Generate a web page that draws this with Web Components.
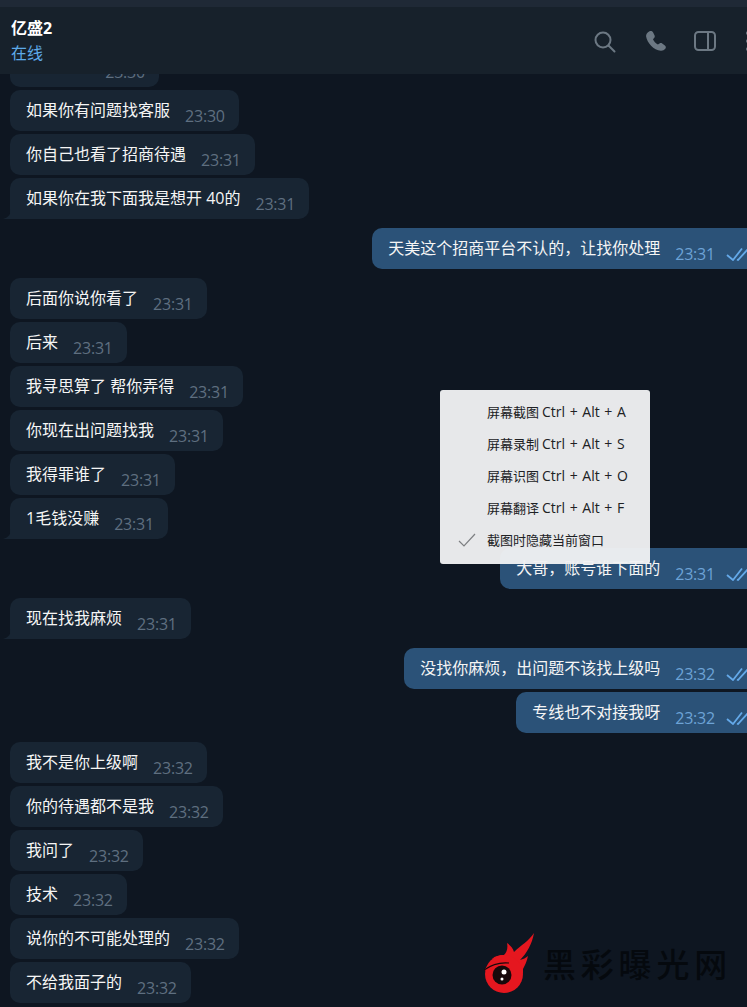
<!DOCTYPE html>
<html>
<head>
<meta charset="utf-8">
<style>
    html, body {
        margin: 0;
        height: 100%;
        overflow: hidden;
        background: #0e1621;
    }
    body {
        font-family: "Open Sans", "Noto Sans CJK SC", sans-serif;
        display: flex;
        flex-direction: column;
        position: relative;
    }
</style>
</head>
<body>
<chat-header name="亿盛2" status="在线"></chat-header>
<message-list>
    <chat-bubble time="23:30" style="--w:149px"></chat-bubble>
    <chat-bubble time="23:30">如果你有问题找客服</chat-bubble>
    <chat-bubble time="23:31">你自己也看了招商待遇</chat-bubble>
    <chat-bubble time="23:31" tail last>如果你在我下面我是想开 40的</chat-bubble>
    <chat-bubble time="23:31" out last>天美这个招商平台不认的，让找你处理</chat-bubble>
    <chat-bubble time="23:31">后面你说你看了</chat-bubble>
    <chat-bubble time="23:31">后来</chat-bubble>
    <chat-bubble time="23:31">我寻思算了 帮你弄得</chat-bubble>
    <chat-bubble time="23:31">你现在出问题找我</chat-bubble>
    <chat-bubble time="23:31">我得罪谁了</chat-bubble>
    <chat-bubble time="23:31" tail last>1毛钱没赚</chat-bubble>
    <chat-bubble time="23:31" out last>大哥，账号谁下面的</chat-bubble>
    <chat-bubble time="23:31" tail last>现在找我麻烦</chat-bubble>
    <chat-bubble time="23:32" out>没找你麻烦，出问题不该找上级吗</chat-bubble>
    <chat-bubble time="23:32" out last>专线也不对接我呀</chat-bubble>
    <chat-bubble time="23:32">我不是你上级啊</chat-bubble>
    <chat-bubble time="23:32">你的待遇都不是我</chat-bubble>
    <chat-bubble time="23:32">我问了</chat-bubble>
    <chat-bubble time="23:32">技术</chat-bubble>
    <chat-bubble time="23:32">说你的不可能处理的</chat-bubble>
    <chat-bubble time="23:32">不给我面子的</chat-bubble>
</message-list>
<capture-menu>
    <menu-row keys="Ctrl + Alt + A">屏幕截图</menu-row>
    <menu-row keys="Ctrl + Alt + S">屏幕录制</menu-row>
    <menu-row keys="Ctrl + Alt + O">屏幕识图</menu-row>
    <menu-row keys="Ctrl + Alt + F">屏幕翻译</menu-row>
    <menu-row checked>截图时隐藏当前窗口</menu-row>
</capture-menu>
<site-mark>黑彩曝光网</site-mark>

<script>
class ChatHeader extends HTMLElement {
    constructor() {
        super();
        this.attachShadow({ mode: 'open' });
    }

    connectedCallback() {
        this.shadowRoot.innerHTML = `
            <style>
                :host {
                    display: block;
                    flex: none;
                    position: relative;
                    z-index: 2;
                    border-top: 7px solid #1f2936;
                    background: #17212b;
                    height: 67px;
                    color: #fff;
                }
                .row {
                    display: flex;
                    align-items: center;
                    justify-content: space-between;
                    height: 100%;
                    padding-left: 11px;
                }
                .who {
                    padding-top: 4px;
                }
                .name {
                    font-size: 16px;
                    font-weight: 700;
                    line-height: 24px;
                    margin-top: -5px;
                }
                .status {
                    font-size: 16px;
                    line-height: 24px;
                    margin-top: 1px;
                    color: #5eaae8;
                }
                .icons {
                    display: flex;
                    align-items: center;
                    margin-right: -13px;
                    margin-top: 1px;
                }
                svg {
                    display: block;
                    flex: none;
                    width: 24px;
                    height: 24px;
                    fill: none;
                    stroke: #6c7883;
                    stroke-width: 2;
                    stroke-linecap: round;
                }
                .solid {
                    fill: #6c7883;
                    stroke: none;
                }
            </style>
            <div class="row">
                <div class="who">
                    <div class="name">${this.getAttribute('name')}</div>
                    <div class="status">${this.getAttribute('status')}</div>
                </div>
                <div class="icons">
                    <svg viewBox="0 0 24 24"><circle cx="10" cy="11" r="7.500"/><path d="M15.500 16.500l6 6"/></svg>
                    <svg viewBox="0 0 24 24" style="margin-left:27px"><path class="solid" d="M5.500 2.200c1.300-.7 2.800-.2 3.500 1.100l1.500 3c.5 1 .3 2-.4 2.800L9 10.300c.9 2.200 2.600 4 4.900 5.100l1.600-1c.9-.5 1.900-.5 2.700.1l2.700 2c1.100.8 1.300 2.300.4 3.300-1.100 1.300-2.700 2-4.400 1.900C9.600 21.300 3 13.500 2.100 7.400 1.800 5.300 3.300 3.300 5.500 2.200z"/></svg>
                    <svg viewBox="0 0 24 24" style="margin-left:25px"><rect x="2" y="3" width="20" height="18" rx="3.500"/><path d="M15 3v18"/></svg>
                    <svg viewBox="0 0 24 24" style="margin-left:19px"><circle class="solid" cx="12" cy="4" r="2"/><circle class="solid" cx="12" cy="12" r="2"/><circle class="solid" cx="12" cy="20" r="2"/></svg>
                </div>
            </div>
        `;
    }
}

class MessageList extends HTMLElement {
    constructor() {
        super();
        this.attachShadow({ mode: 'open' }).innerHTML = `
            <style>
                :host {
                    display: flex;
                    flex-direction: column;
                    align-items: flex-start;
                    gap: 3px;
                    flex: none;
                    margin-top: -28px;
                    padding-left: 10px;
                }
            </style>
            <slot></slot>
        `;
    }
}

class ChatBubble extends HTMLElement {
    constructor() {
        super();
        this.attachShadow({ mode: 'open' });
    }

    connectedCallback() {
        const time = this.getAttribute('time');
        const out = this.hasAttribute('out');
        const checks = out ? `
            <svg class="checks" viewBox="0 0 24 14">
                <path d="M2 8l6 5L17 1.500M12 12.500l1 .5L24 1"/>
            </svg>` : '';
        // The tail sits just left of the bubble's square bottom corner
        const tail = this.hasAttribute('tail') ? `
            <svg class="tail" viewBox="0 0 8 10"><path d="M8 0C8 4.500 6 8.500 0 10h8z"/></svg>` : '';

        this.shadowRoot.innerHTML = `
            <style>
                :host {
                    display: flex;
                    flex: none;
                    position: relative;
                    box-sizing: border-box;
                    height: 41px;
                    padding: 0 14px 0 16px;
                    border-radius: 10px;
                    background: #182533;
                    color: #f5f5f5;
                    font-size: 16px;
                }
                :host([last]) {
                    margin-bottom: 6px;
                }
                :host([tail]) {
                    border-bottom-left-radius: 0;
                }
                :host([out]) {
                    align-self: flex-end;
                    background: #2b5278;
                    padding-right: 7px;
                    margin-right: -9px;
                    border-radius: 10px 0 0 10px;
                }
                :host([style]) {
                    width: var(--w);
                }
                .text {
                    line-height: 24px;
                    padding-top: 8px;
                    white-space: nowrap;
                }
                .time {
                    margin-left: 15px;
                    line-height: 22px;
                    padding-top: 15px;
                    letter-spacing: -.2px;
                    color: #5f6f80;
                }
                :host([out]) .time {
                    color: #6da3d6;
                }
                :host([style]) .time {
                    margin-left: auto;
                }
                .checks {
                    width: 24px;
                    height: 14px;
                    margin: 19px 0 0 10px;
                    fill: none;
                    stroke: #64a9e9;
                    stroke-width: 1.800;
                }
                .tail {
                    position: absolute;
                    left: -7px;
                    bottom: 0;
                    width: 8px;
                    height: 10px;
                    fill: #182533;
                }
            </style>
            ${tail}
            <span class="text"><slot></slot></span>
            <span class="time">${time}</span>
            ${checks}
        `;
    }
}

class CaptureMenu extends HTMLElement {
    constructor() {
        super();
        this.attachShadow({ mode: 'open' }).innerHTML = `
            <style>
                :host {
                    display: block;
                    position: absolute;
                    left: 440px;
                    top: 390px;
                    width: 210px;
                    box-sizing: border-box;
                    padding: 6px 0 8px;
                    border-radius: 3px;
                    background: rgba(240, 241, 243, .96);
                    color: #202124;
                    z-index: 3;
                }
            </style>
            <slot></slot>
        `;
    }
}

class MenuRow extends HTMLElement {
    constructor() {
        super();
        this.attachShadow({ mode: 'open' });
    }

    connectedCallback() {
        const keys = this.getAttribute('keys');
        this.shadowRoot.innerHTML = `
            <style>
                :host {
                    display: flex;
                    align-items: center;
                    height: 32px;
                    margin-top: -1px;
                    margin-bottom: 1px;
                    padding-left: 47px;
                    font-size: 13px;
                    white-space: nowrap;
                    position: relative;
                }
                svg {
                    display: none;
                    position: absolute;
                    left: 18px;
                    top: 10px;
                    width: 18px;
                    height: 14px;
                    fill: none;
                    stroke: #7d7f82;
                    stroke-width: 1.200;
                }
                :host([checked]) svg {
                    display: block;
                }
                .keys {
                    margin-left: 3px;
                    font-size: 14px;
                    word-spacing: 1px;
                }
            </style>
            <svg viewBox="0 0 18 14"><path d="M1 8l5 5L17 1"/></svg>
            <slot></slot>
            ${keys ? `<span class="keys">${keys}</span>` : ''}
        `;
    }
}

class SiteMark extends HTMLElement {
    constructor() {
        super();
        this.attachShadow({ mode: 'open' }).innerHTML = `
            <style>
                :host {
                    display: flex;
                    align-items: center;
                    gap: 9px;
                    position: absolute;
                    left: 484px;
                    top: 933px;
                    z-index: 1;
                    color: #05090e;
                    font-family: "Noto Sans CJK SC", sans-serif;
                    font-size: 33px;
                    font-weight: 500;
                    letter-spacing: 4.800px;
                    white-space: nowrap;
                }
                svg {
                    display: block;
                    width: 50px;
                    height: 60px;
                }
            </style>
            <svg viewBox="0 0 50 60">
                <path fill="#e5171f" d="M50 0C45 8 37 12 30 19 29 15 26 12 23 10 24 15 23 19 20 22 15 22 11 23 8 26 11 25 14 25 16 26 9 28 4 32 0 37L20 41 39 40 39 36C41 32 43 28 44 23 42 25 39 26 36 27 43 20 48 11 50 0z"/>
                <circle cx="20" cy="41" r="19" fill="#e5171f"/>
                <path fill="none" stroke="#16090b" stroke-width="1.200" d="M0 37C7 32 15 29 25 30"/>
                <circle cx="18" cy="42" r="9.500" fill="#16090b"/>
                <circle cx="20" cy="39" r="2.500" fill="#fff"/>
                <circle cx="18" cy="46" r="1.500" fill="#fff"/>
            </svg>
            <span><slot></slot></span>
        `;
    }
}

customElements.define('chat-header', ChatHeader);
customElements.define('message-list', MessageList);
customElements.define('chat-bubble', ChatBubble);
customElements.define('capture-menu', CaptureMenu);
customElements.define('menu-row', MenuRow);
customElements.define('site-mark', SiteMark);
</script>
</body>
</html>
